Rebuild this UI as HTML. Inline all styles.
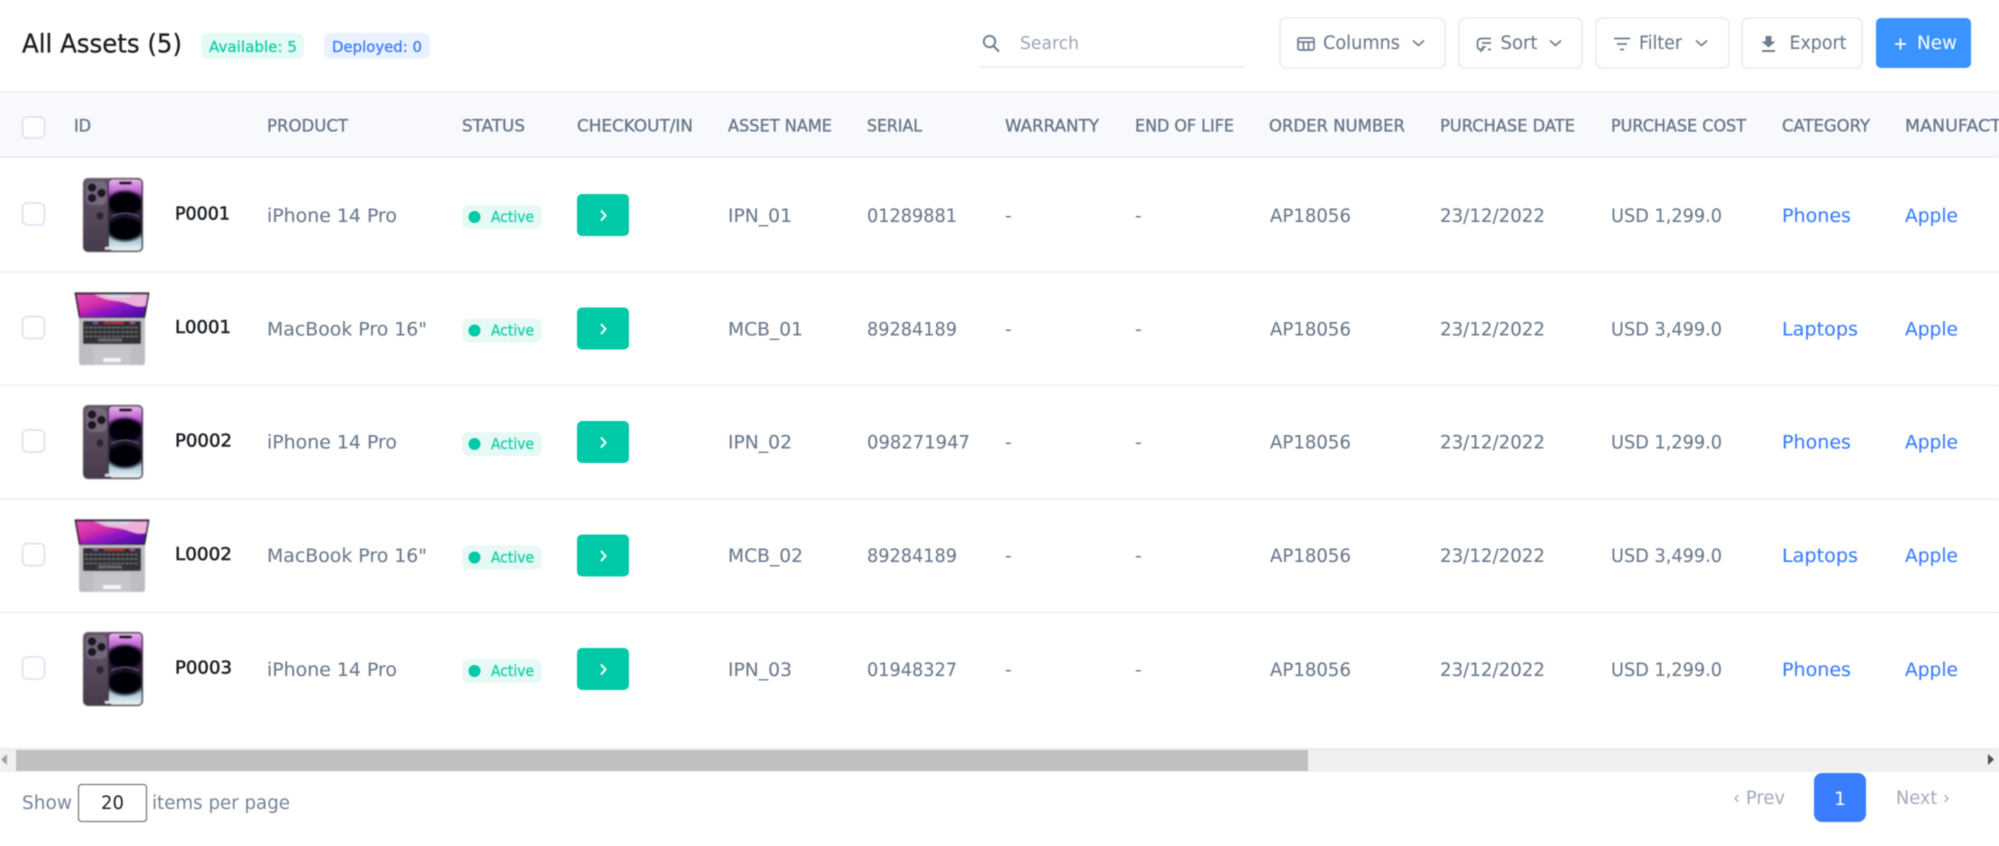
<!DOCTYPE html>
<html><head><meta charset="utf-8"><title>All Assets</title>
<style>
html,body{margin:0;padding:0;background:#fff;width:1999px;height:846px;overflow:hidden}
svg{display:block;filter:blur(.55px)}
text{font-family:"DejaVu Sans","Liberation Sans",sans-serif;white-space:pre}
.h{font-size:16.5px;fill:#67768a;stroke:#67768a;stroke-width:.35px}
.b{font-size:18.5px;fill:#6c7a8c;stroke:#6c7a8c;stroke-width:.1px}
.l{font-size:18.5px;fill:#3a7dff;stroke:#3a7dff;stroke-width:.1px}
.i{font-size:18px;fill:#1d2126;stroke:#1d2126;stroke-width:.55px}
.a{font-size:15px;fill:#14cfa9;stroke:#14cfa9;stroke-width:.3px}
.t{font-size:18.5px;fill:#6c7a8c;stroke:#6c7a8c;stroke-width:.1px}
.ic{fill:none;stroke:#6f7d8e;stroke-width:1.7}
.img{filter:url(#soft)}
</style></head><body>
<svg width="1999" height="846" viewBox="0 0 1999 846" xmlns="http://www.w3.org/2000/svg">
<defs>
<filter id="soft" x="-5%" y="-5%" width="110%" height="110%"><feGaussianBlur stdDeviation=".45"/></filter>
<linearGradient id="scr" x1="0" y1="0" x2="0" y2="1">
<stop offset="0" stop-color="#e6b4ea"/><stop offset=".2" stop-color="#b552cf"/><stop offset=".36" stop-color="#5a1c88"/><stop offset=".5" stop-color="#2a1c3a"/><stop offset=".64" stop-color="#1a2834"/><stop offset=".82" stop-color="#9cc0d0"/><stop offset="1" stop-color="#eef4f7"/>
</linearGradient>
<radialGradient id="blob"><stop offset="0" stop-color="#030206"/><stop offset=".72" stop-color="#050308"/><stop offset="1" stop-color="#050308" stop-opacity="0"/></radialGradient>
<linearGradient id="back" x1="0" y1="0" x2="0" y2="1"><stop offset="0" stop-color="#64566a"/><stop offset="1" stop-color="#463b4b"/></linearGradient>
<linearGradient id="mac" x1="0" y1="0" x2="1" y2="1">
<stop offset="0" stop-color="#e24fc0"/><stop offset=".35" stop-color="#d42ea8"/><stop offset=".6" stop-color="#8a14c4"/><stop offset="1" stop-color="#3d0a9e"/>
</linearGradient>
<clipPath id="scrclip"><rect x="26" y="1.500" width="32.500" height="71" rx="3.500"/></clipPath>
<g id="phone">
<rect x="0" y="0" width="34" height="74" rx="5" fill="url(#back)"/>
<rect x="3" y="3" width="21" height="24" rx="6" fill="#75677a"/>
<circle cx="9" cy="9.500" r="4.300" fill="#1d1820"/><circle cx="9" cy="20" r="4.300" fill="#1d1820"/><circle cx="18.500" cy="15" r="4.300" fill="#1d1820"/>
<ellipse cx="17" cy="38" rx="3.500" ry="4" fill="#2c2530"/>
<rect x="24.500" y="0" width="35.500" height="74" rx="5" fill="#3a363c"/>
<rect x="26" y="1.500" width="32.500" height="71" rx="3.500" fill="url(#scr)"/>
<g clip-path="url(#scrclip)">
<ellipse cx="42" cy="25" rx="21" ry="14" fill="url(#blob)"/>
<ellipse cx="42" cy="51" rx="21" ry="14" fill="url(#blob)"/>
</g>
<path d="M28 38.500Q42 32 56 38.500" fill="none" stroke="#7a6c86" stroke-width=".8"/>
<rect x="36" y="3.500" width="13" height="3" rx="1.500" fill="#0a0a0e"/>
<rect x="22" y="69" width="13" height="2.500" fill="#e4e4e8"/>
</g>
<g id="laptop">
<path d="M0.500 0.500H75.500L71 26H5Z" fill="#1b1b20"/>
<path d="M2.500 2.500H73.500L69.500 25H6.500Z" fill="url(#mac)"/>
<path d="M20 2.500H73.500L71.500 14C64 16 58 13 52 11C42 8 34 9 28 6Z" fill="#eeb0da"/>
<path d="M25 2.500H60C56 6 44 7 34 5Z" fill="#d8d4ea"/>
<path d="M5 26H71V70Q71 73 68 73H8Q5 73 5 70Z" fill="#bdbdc2"/>
<rect x="9" y="29" width="58" height="23" rx="1" fill="#303036"/>
<rect x="10" y="29.500" width="56" height="2.500" fill="#2a2a30"/>
<rect x="30" y="29.800" width="20" height="2" fill="#c4302f"/>
<rect x="19" y="29.800" width="5" height="2" fill="#a23fd0"/><rect x="56" y="29.800" width="5" height="2" fill="#d040b0"/>
<path d="M11 35.500H65M11 40H65M11 44.500H65" stroke="#7d7d84" stroke-width="1" stroke-dasharray="3 1.500"/>
<rect x="24" y="46.500" width="24" height="3" fill="#66666c"/>
<rect x="19" y="54" width="38" height="19" fill="#c6c6ca"/>
<rect x="29" y="66" width="18" height="4" rx="1" fill="#f4f4f6"/>
</g>
<g id="rowbase">
<rect x="22.500" y="1" width="22" height="22" rx="5" fill="#fff" stroke="#e2e6f3" stroke-width="2"/>
<rect x="462" y="3" width="80" height="24" rx="7" fill="#e6f9f5"/>
<circle cx="474.500" cy="15" r="6" fill="#00c9a7"/>
<rect x="577" y="-8" width="52" height="42" rx="5" fill="#00c9a7"/>
<path d="M601 8.500L605.500 13.500L601 18.500" fill="none" stroke="#fff" stroke-width="2"/>
</g>
</defs>

<rect width="1999" height="846" fill="#fff"/>

<!-- top bar -->
<text x="22" y="52.500" style="font-size:26px;fill:#1d2126;stroke:#1d2126;stroke-width:.35px" textLength="160" lengthAdjust="spacingAndGlyphs">All Assets (5)</text>
<rect x="201" y="33" width="103" height="26" rx="7" fill="#e6faf5"/>
<text x="209" y="52" style="font-size:15.500px;fill:#0fcda8;stroke:#0fcda8;stroke-width:.3px" textLength="88" lengthAdjust="spacingAndGlyphs">Available: 5</text>
<rect x="324" y="33" width="106" height="26" rx="7" fill="#e9f1ff"/>
<text x="332" y="52" style="font-size:15.500px;fill:#3a7dff;stroke:#3a7dff;stroke-width:.3px" textLength="90" lengthAdjust="spacingAndGlyphs">Deployed: 0</text>

<circle cx="989.500" cy="41.500" r="5.700" fill="none" stroke="#6f7d8e" stroke-width="1.900"/>
<path d="M993.500 46L999 51.500" stroke="#6f7d8e" stroke-width="2" fill="none"/>
<text x="1020" y="49" style="font-size:18px;fill:#9aa6b5" textLength="59" lengthAdjust="spacingAndGlyphs">Search</text>
<rect x="980" y="66" width="265" height="2" fill="#eef0f6"/>

<g fill="#fff" stroke="#eceff6" stroke-width="2">
<rect x="1280" y="18" width="165" height="50" rx="6"/>
<rect x="1459" y="18" width="123" height="50" rx="6"/>
<rect x="1596" y="18" width="133" height="50" rx="6"/>
<rect x="1742" y="18" width="120" height="50" rx="6"/>
</g>
<rect x="1876" y="18" width="95" height="50" rx="5" fill="#3b93ff"/>

<!-- columns -->
<g class="ic"><rect x="1298" y="38" width="16" height="12" rx="1.500"/><path d="M1298 42H1314M1303.500 42V50M1308.500 42V50"/></g>
<text class="t" x="1323" y="49" textLength="77" lengthAdjust="spacingAndGlyphs">Columns</text>
<path class="ic" d="M1413 40.500L1418.500 45.500L1424 40.500"/>
<!-- sort -->
<path class="ic" d="M1491 38.500H1482Q1477.500 38.500 1477.500 43V46Q1477.500 49.500 1481 49.500H1484M1482 43H1491M1482 47H1486M1488 49.500H1491M1483 47L1480.500 52"/>
<text class="t" x="1500.500" y="49" textLength="37" lengthAdjust="spacingAndGlyphs">Sort</text>
<path class="ic" d="M1550 40.500L1555.500 45.500L1561 40.500"/>
<!-- filter -->
<path class="ic" d="M1614 38.500H1630M1617 44H1627M1620 49.500H1624"/>
<text class="t" x="1639" y="49" textLength="43" lengthAdjust="spacingAndGlyphs">Filter</text>
<path class="ic" d="M1696 40.500L1701.500 45.500L1707 40.500"/>
<!-- export -->
<path d="M1765.500 36H1771.500V41.500H1775.500L1768.500 47.500L1761.500 41.500H1765.500Z" fill="#6f7d8e"/>
<rect x="1762" y="50" width="13" height="2" fill="#6f7d8e"/>
<text class="t" x="1789.500" y="49" textLength="57" lengthAdjust="spacingAndGlyphs">Export</text>
<!-- new -->
<path d="M1895 44H1906M1900.500 38.500V49.500" stroke="#fff" stroke-width="1.800" fill="none"/>
<text x="1917" y="49" style="font-size:18.500px;fill:#fff" textLength="40" lengthAdjust="spacingAndGlyphs">New</text>

<!-- header row -->
<rect x="0" y="91" width="1999" height="67" fill="#f8f9fd"/>
<rect x="0" y="91" width="1999" height="2" fill="#eff1f6"/>
<rect x="0" y="156" width="1999" height="2" fill="#eceef4"/>
<rect x="22.500" y="117" width="22" height="21" rx="5" fill="#fff" stroke="#e2e6f3" stroke-width="2"/>
<text class="h" x="74" y="131.500" textLength="17" lengthAdjust="spacingAndGlyphs">ID</text>
<text class="h" x="267" y="131.500" textLength="81" lengthAdjust="spacingAndGlyphs">PRODUCT</text>
<text class="h" x="462" y="131.500" textLength="63" lengthAdjust="spacingAndGlyphs">STATUS</text>
<text class="h" x="577" y="131.500" textLength="116" lengthAdjust="spacingAndGlyphs">CHECKOUT/IN</text>
<text class="h" x="728" y="131.500" textLength="104" lengthAdjust="spacingAndGlyphs">ASSET NAME</text>
<text class="h" x="867" y="131.500" textLength="55" lengthAdjust="spacingAndGlyphs">SERIAL</text>
<text class="h" x="1005" y="131.500" textLength="94" lengthAdjust="spacingAndGlyphs">WARRANTY</text>
<text class="h" x="1135" y="131.500" textLength="99" lengthAdjust="spacingAndGlyphs">END OF LIFE</text>
<text class="h" x="1269" y="131.500" textLength="136" lengthAdjust="spacingAndGlyphs">ORDER NUMBER</text>
<text class="h" x="1440" y="131.500" textLength="135" lengthAdjust="spacingAndGlyphs">PURCHASE DATE</text>
<text class="h" x="1611" y="131.500" textLength="135" lengthAdjust="spacingAndGlyphs">PURCHASE COST</text>
<text class="h" x="1782" y="131.500" textLength="88" lengthAdjust="spacingAndGlyphs">CATEGORY</text>
<text class="h" x="1905" y="131.500" textLength="144" lengthAdjust="spacingAndGlyphs">MANUFACTURER</text>

<!-- row lines -->
<g fill="#f1f2f6"><rect y="271" width="1999" height="2"/><rect y="384.500" width="1999" height="2"/><rect y="498" width="1999" height="2"/><rect y="611.500" width="1999" height="2"/></g>

<!-- row 1 -->
<use href="#rowbase" x="0" y="202"/>
<use class="img" href="#phone" x="83" y="178"/>
<text class="i" x="175" y="219.500" textLength="55" lengthAdjust="spacingAndGlyphs">P0001</text>
<text class="b" x="267" y="222" textLength="130" lengthAdjust="spacingAndGlyphs">iPhone 14 Pro</text>
<text class="a" x="491" y="222" textLength="43" lengthAdjust="spacingAndGlyphs">Active</text>
<text class="b" x="728" y="222" textLength="64" lengthAdjust="spacingAndGlyphs">IPN_01</text>
<text class="b" x="867" y="222" textLength="90" lengthAdjust="spacingAndGlyphs">01289881</text>
<text class="b" x="1005" y="222">-</text><text class="b" x="1135" y="222">-</text>
<text class="b" x="1270" y="222" textLength="81" lengthAdjust="spacingAndGlyphs">AP18056</text>
<text class="b" x="1440" y="222" textLength="105" lengthAdjust="spacingAndGlyphs">23/12/2022</text>
<text class="b" x="1611" y="222" textLength="111" lengthAdjust="spacingAndGlyphs">USD 1,299.0</text>
<text class="l" x="1782" y="222" textLength="69" lengthAdjust="spacingAndGlyphs">Phones</text>
<text class="l" x="1905" y="222" textLength="53" lengthAdjust="spacingAndGlyphs">Apple</text>

<!-- row 2 -->
<use href="#rowbase" x="0" y="315.500"/>
<use class="img" href="#laptop" x="74" y="292"/>
<text class="i" x="175" y="333" textLength="56" lengthAdjust="spacingAndGlyphs">L0001</text>
<text class="b" x="267" y="335.500" textLength="160" lengthAdjust="spacingAndGlyphs">MacBook Pro 16"</text>
<text class="a" x="491" y="335.500" textLength="43" lengthAdjust="spacingAndGlyphs">Active</text>
<text class="b" x="728" y="335.500" textLength="75" lengthAdjust="spacingAndGlyphs">MCB_01</text>
<text class="b" x="867" y="335.500" textLength="90" lengthAdjust="spacingAndGlyphs">89284189</text>
<text class="b" x="1005" y="335.500">-</text><text class="b" x="1135" y="335.500">-</text>
<text class="b" x="1270" y="335.500" textLength="81" lengthAdjust="spacingAndGlyphs">AP18056</text>
<text class="b" x="1440" y="335.500" textLength="105" lengthAdjust="spacingAndGlyphs">23/12/2022</text>
<text class="b" x="1611" y="335.500" textLength="111" lengthAdjust="spacingAndGlyphs">USD 3,499.0</text>
<text class="l" x="1782" y="335.500" textLength="76" lengthAdjust="spacingAndGlyphs">Laptops</text>
<text class="l" x="1905" y="335.500" textLength="53" lengthAdjust="spacingAndGlyphs">Apple</text>

<!-- row 3 -->
<use href="#rowbase" x="0" y="429"/>
<use class="img" href="#phone" x="83" y="405"/>
<text class="i" x="175" y="446.500" textLength="57" lengthAdjust="spacingAndGlyphs">P0002</text>
<text class="b" x="267" y="448.500" textLength="130" lengthAdjust="spacingAndGlyphs">iPhone 14 Pro</text>
<text class="a" x="491" y="449" textLength="43" lengthAdjust="spacingAndGlyphs">Active</text>
<text class="b" x="728" y="448.500" textLength="64" lengthAdjust="spacingAndGlyphs">IPN_02</text>
<text class="b" x="867" y="448.500" textLength="103" lengthAdjust="spacingAndGlyphs">098271947</text>
<text class="b" x="1005" y="448.500">-</text><text class="b" x="1135" y="448.500">-</text>
<text class="b" x="1270" y="448.500" textLength="81" lengthAdjust="spacingAndGlyphs">AP18056</text>
<text class="b" x="1440" y="448.500" textLength="105" lengthAdjust="spacingAndGlyphs">23/12/2022</text>
<text class="b" x="1611" y="448.500" textLength="111" lengthAdjust="spacingAndGlyphs">USD 1,299.0</text>
<text class="l" x="1782" y="448.500" textLength="69" lengthAdjust="spacingAndGlyphs">Phones</text>
<text class="l" x="1905" y="448.500" textLength="53" lengthAdjust="spacingAndGlyphs">Apple</text>

<!-- row 4 -->
<use href="#rowbase" x="0" y="542.500"/>
<use class="img" href="#laptop" x="74" y="519"/>
<text class="i" x="175" y="560" textLength="57" lengthAdjust="spacingAndGlyphs">L0002</text>
<text class="b" x="267" y="562" textLength="160" lengthAdjust="spacingAndGlyphs">MacBook Pro 16"</text>
<text class="a" x="491" y="562.500" textLength="43" lengthAdjust="spacingAndGlyphs">Active</text>
<text class="b" x="728" y="562" textLength="75" lengthAdjust="spacingAndGlyphs">MCB_02</text>
<text class="b" x="867" y="562" textLength="90" lengthAdjust="spacingAndGlyphs">89284189</text>
<text class="b" x="1005" y="562">-</text><text class="b" x="1135" y="562">-</text>
<text class="b" x="1270" y="562" textLength="81" lengthAdjust="spacingAndGlyphs">AP18056</text>
<text class="b" x="1440" y="562" textLength="105" lengthAdjust="spacingAndGlyphs">23/12/2022</text>
<text class="b" x="1611" y="562" textLength="111" lengthAdjust="spacingAndGlyphs">USD 3,499.0</text>
<text class="l" x="1782" y="562" textLength="76" lengthAdjust="spacingAndGlyphs">Laptops</text>
<text class="l" x="1905" y="562" textLength="53" lengthAdjust="spacingAndGlyphs">Apple</text>

<!-- row 5 -->
<use href="#rowbase" x="0" y="656"/>
<use class="img" href="#phone" x="83" y="632"/>
<text class="i" x="175" y="673.500" textLength="57" lengthAdjust="spacingAndGlyphs">P0003</text>
<text class="b" x="267" y="676" textLength="130" lengthAdjust="spacingAndGlyphs">iPhone 14 Pro</text>
<text class="a" x="491" y="676" textLength="43" lengthAdjust="spacingAndGlyphs">Active</text>
<text class="b" x="728" y="676" textLength="64" lengthAdjust="spacingAndGlyphs">IPN_03</text>
<text class="b" x="867" y="676" textLength="90" lengthAdjust="spacingAndGlyphs">01948327</text>
<text class="b" x="1005" y="676">-</text><text class="b" x="1135" y="676">-</text>
<text class="b" x="1270" y="676" textLength="81" lengthAdjust="spacingAndGlyphs">AP18056</text>
<text class="b" x="1440" y="676" textLength="105" lengthAdjust="spacingAndGlyphs">23/12/2022</text>
<text class="b" x="1611" y="676" textLength="111" lengthAdjust="spacingAndGlyphs">USD 1,299.0</text>
<text class="l" x="1782" y="676" textLength="69" lengthAdjust="spacingAndGlyphs">Phones</text>
<text class="l" x="1905" y="676" textLength="53" lengthAdjust="spacingAndGlyphs">Apple</text>

<!-- scrollbar -->
<rect x="0" y="748" width="1999" height="24" fill="#f0f0f0"/>
<rect x="0" y="748" width="1999" height="2" fill="#e9ecf1"/>
<rect x="16" y="750" width="1292" height="21" fill="#c0c0c0"/>
<path d="M7 754L1 759.500L7 765Z" fill="#a3a3a3"/>
<path d="M1988 754L1994 759.500L1988 765Z" fill="#505050"/>

<!-- footer -->
<text x="22" y="809" style="font-size:18.500px;fill:#738399" textLength="50" lengthAdjust="spacingAndGlyphs">Show</text>
<rect x="78.500" y="784.500" width="68" height="37" rx="3" fill="#fff" stroke="#7a7a7a" stroke-width="1.300"/>
<text x="101" y="809" style="font-size:19px;fill:#1d2126" textLength="23" lengthAdjust="spacingAndGlyphs">20</text>
<text x="152" y="809" style="font-size:18.500px;fill:#738399" textLength="138" lengthAdjust="spacingAndGlyphs">items per page</text>

<text x="1733" y="804" style="font-size:18.500px;fill:#a0abb9" textLength="52" lengthAdjust="spacingAndGlyphs">‹ Prev</text>
<rect x="1814" y="773" width="52" height="49" rx="8" fill="#3a7dff"/>
<text x="1840" y="805" text-anchor="middle" style="font-size:18.500px;fill:#fff">1</text>
<text x="1896" y="804" style="font-size:18.500px;fill:#a0abb9" textLength="54" lengthAdjust="spacingAndGlyphs">Next ›</text>
</svg>
</body></html>
